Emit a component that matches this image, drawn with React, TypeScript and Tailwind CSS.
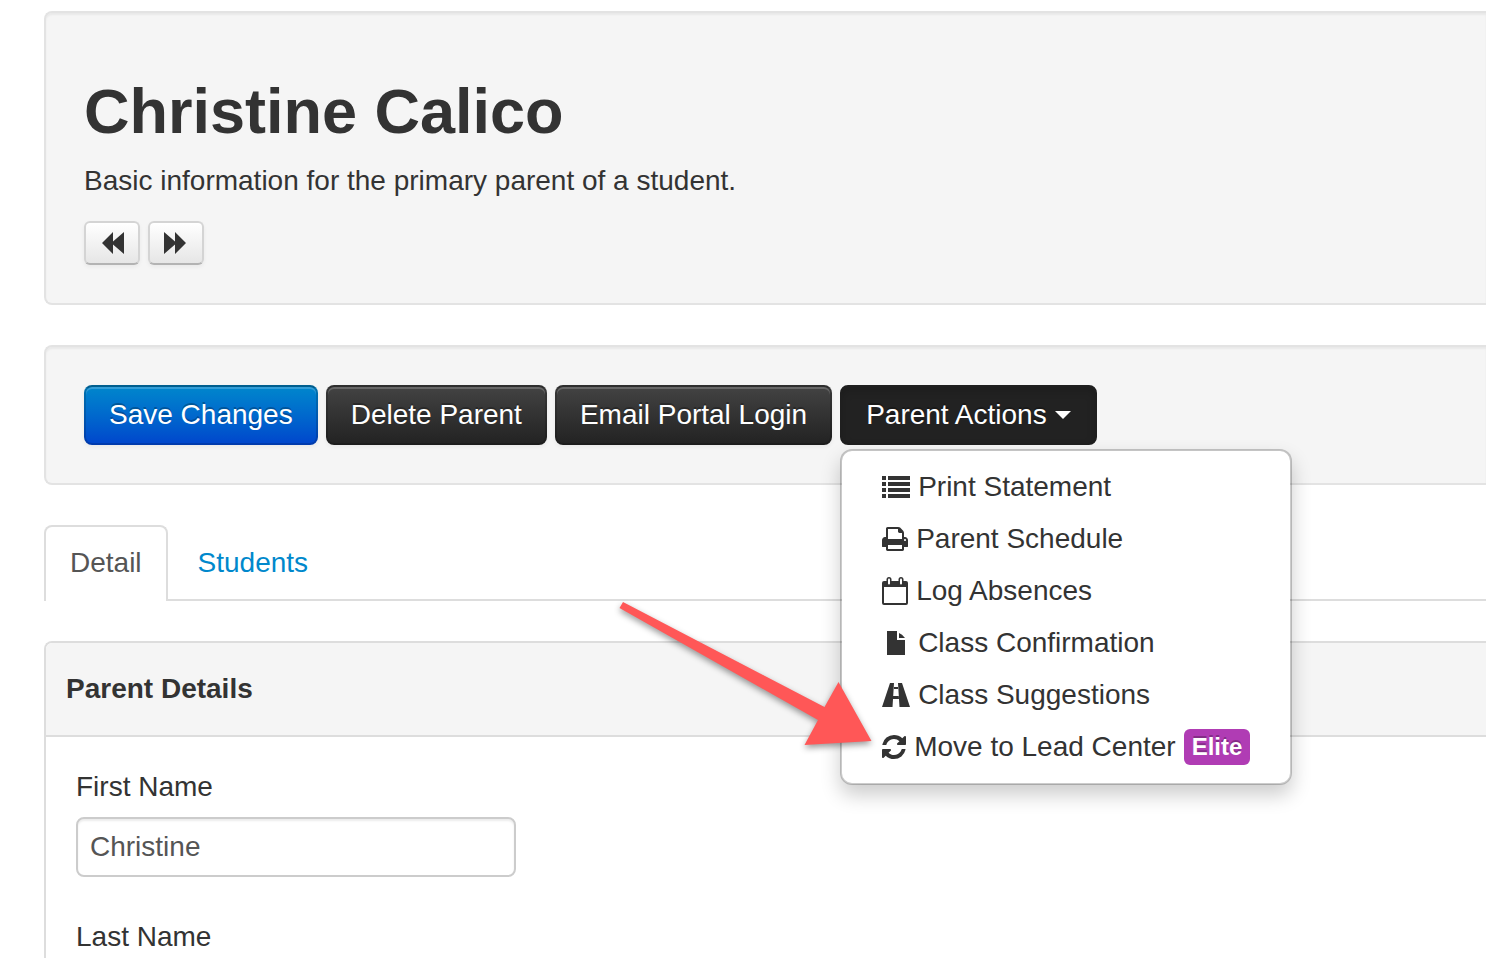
import React, { useState } from 'react';

type IconProps = { className?: string };

const ListIcon = ({ className }: IconProps) => (
    <svg viewBox="0 0 28 22" className={className} fill="currentColor" aria-hidden="true">
        <path d="M0 0h4v4H0zM6 0h22v4H6zM0 6h4v4H0zM6 6h22v4H6zM0 12h4v4H0zM6 12h22v4H6zM0 18h4v4H0zM6 18h22v4H6z" />
    </svg>
);

const PrintIcon = ({ className }: IconProps) => (
    <svg viewBox="0 128 1664 1536" className={className} fill="currentColor" aria-hidden="true">
        <path d="M384 1536h896v-256h-896v256zM384 896h896v-384h-160q-40 0-68-28t-28-68v-160h-640v640zM1536 960q0-26-19-45t-45-19-45 19-19 45 19 45 45 19 45-19 19-45zM1664 960v416q0 13-9.5 22.5t-22.5 9.5h-224v160q0 40-28 68t-68 28h-960q-40 0-68-28t-28-68v-160h-224q-13 0-22.5-9.5t-9.5-22.5v-416q0-79 56.5-135.5t135.5-56.5h64v-544q0-40 28-68t68-28h672q40 0 88 20t76 48l152 152q28 28 48 76t20 88v256h64q79 0 135.5 56.5t56.5 135.5z" />
    </svg>
);

const CalendarIcon = ({ className }: IconProps) => (
    <svg viewBox="0 0 26 28" className={className} fill="currentColor" aria-hidden="true">
        <path fillRule="evenodd" d="M2 4h22a2 2 0 0 1 2 2v20a2 2 0 0 1-2 2H2a2 2 0 0 1-2-2V6a2 2 0 0 1 2-2zM2 10v16h22V10z" />
        <rect x="4.5" y="0" width="5" height="9" rx="2.5" />
        <rect x="16.5" y="0" width="5" height="9" rx="2.5" />
        <rect x="6" y="1.5" width="2" height="6" rx="1" fill="white" />
        <rect x="18" y="1.5" width="2" height="6" rx="1" fill="white" />
    </svg>
);

const FileIcon = ({ className }: IconProps) => (
    <svg viewBox="0 0 18 24" className={className} fill="currentColor" aria-hidden="true">
        <path d="M0 0h10v9h8v15H0zM12 2q3 1 6 5h-6z" />
    </svg>
);

const RoadIcon = ({ className }: IconProps) => (
    <svg viewBox="0 0 28 24" className={className} fill="currentColor" aria-hidden="true">
        <path d="M8 0h4l-1.500 24H0zM20 0h-4l1.500 24H28zM12 4h4v2h-4zM11 13h6v3h-6z" />
    </svg>
);

const RefreshIcon = ({ className }: IconProps) => (
    <svg viewBox="128 128 1536 1536" className={className} fill="currentColor" aria-hidden="true">
        <path d="M1639 1056q0 5-1 7-64 268-268 434.500t-478 166.500q-146 0-282.500-55t-243.500-157l-129 129q-19 19-45 19t-45-19-19-45v-448q0-26 19-45t45-19h448q26 0 45 19t19 45-19 45l-137 137q71 66 161 102t187 36q134 0 250-65t186-179q11-17 53-117 8-23 30-23h192q13 0 22.500 9.500t9.500 22.500zm25-800v448q0 26-19 45t-45 19h-448q-26 0-45-19t-19-45 19-45l138-138q-148-137-349-137-134 0-250 65t-186 179q-11 17-53 117-8 23-30 23h-199q-13 0-22.500-9.500t-9.500-22.500v-7q65-268 270-434.500t480-166.500q146 0 284 55.500t245 156.500l130-129q19-19 45-19t45 19 19 45z" />
    </svg>
);

const BackwardIcon = ({ className }: IconProps) => (
    <svg viewBox="0 0 24 24" className={className} fill="currentColor" aria-hidden="true">
        <path d="M2 12L13 1v9.500L24 1v22l-11-9.500V23z" />
    </svg>
);

const MENU_ITEMS = [
    { label: 'Print Statement', icon: <ListIcon className="w-7 h-[22px]" /> },
    { label: 'Parent Schedule', icon: <PrintIcon className="w-[26px] h-6" /> },
    { label: 'Log Absences', icon: <CalendarIcon className="w-[26px] h-7" /> },
    { label: 'Class Confirmation', icon: <FileIcon className="w-[18px] h-6 mx-[5px]" /> },
    { label: 'Class Suggestions', icon: <RoadIcon className="w-7 h-6" /> },
    { label: 'Move to Lead Center', icon: <RefreshIcon className="size-6" />, badge: 'Elite' },
];

const WELL = 'rounded-l-lg border-2 border-r-0 border-[#e3e3e3] bg-[#f5f5f5] p-[38px] shadow-[inset_0_2px_2px_rgba(0,0,0,0.05)]';
const BTN = 'h-[60px] rounded-lg border-2 text-white whitespace-nowrap [text-shadow:0_-2px_0_rgba(0,0,0,0.25)]';
const BTN_RAISED = 'px-[23px] border-black/15 border-t-black/30 bg-linear-to-b bg-origin-border shadow-[inset_0_2px_0_rgba(255,255,255,0.2),0_2px_4px_rgba(0,0,0,0.05)]';
const BTN_PRIMARY = 'from-[#0088cc] to-[#0044cc]';
const BTN_DARK = 'from-[#444] to-[#222]';
const BTN_MINI = 'flex h-11 w-14 items-center justify-center rounded-md border-2 border-[#d4d4d4] border-b-[#b3b3b3] bg-linear-to-b from-white to-[#e6e6e6] text-[#333] shadow-[0_2px_4px_rgba(0,0,0,0.05)]';
const INPUT = 'h-[60px] w-[440px] rounded-lg border-2 border-[#ccc] bg-white px-3 text-[#555] outline-none shadow-[inset_0_2px_2px_rgba(0,0,0,0.075)]';

const ParentActions = () => {
    const [open, setOpen] = useState(true);

    return (
        <div className="relative">
            <button
                type="button"
                aria-expanded={open}
                onClick={() => setOpen(!open)}
                className={`${BTN} flex items-center gap-2 border-[#1f1f1f] bg-[#222] px-6 shadow-[inset_0_4px_8px_rgba(0,0,0,0.15)]`}
            >
                Parent Actions
                <span className="border-x-8 border-t-8 border-x-transparent border-t-white" />
            </button>
            {open && (
                <ul className="absolute left-0 top-full z-10 mt-1 rounded-xl border-2 border-black/20 bg-white bg-clip-padding py-2.5 shadow-[0_10px_20px_rgba(0,0,0,0.2)]">
                    {MENU_ITEMS.map(item => (
                        <li key={item.label}>
                            <a href="#" className="flex items-center gap-2 whitespace-nowrap px-10 py-1.5">
                                {item.icon}
                                {item.label}
                                {item.badge && (
                                    <span className="rounded-md bg-[#b03cb4] px-2 py-1 text-2xl/7 font-bold text-white [text-shadow:0_-2px_0_rgba(0,0,0,0.25)]">
                                        {item.badge}
                                    </span>
                                )}
                            </a>
                        </li>
                    ))}
                </ul>
            )}
        </div>
    );
};

const Arrow = () => (
    <svg
        viewBox="0 0 260 150"
        className="pointer-events-none absolute left-[615px] top-[598px] z-20 h-[150px] w-[260px] drop-shadow-[0_3px_3px_rgba(0,0,0,0.4)]"
        aria-hidden="true"
    >
        <path fill="#ff5757" d="M8 4L209.500 109L223.500 84L256.500 143L189.500 147L203 122L4.500 10z" />
    </svg>
);

const App: React.FC = () => {
    const [firstName, setFirstName] = useState('Christine');
    const [lastName, setLastName] = useState('');

    return (
        <div className="relative h-screen overflow-hidden bg-white pl-11 pt-[11px] font-['Liberation_Sans',Arial,sans-serif] text-[28px]/10 text-[#333]">
            <main className="flex flex-col gap-10">
                <header className={WELL}>
                    <h1 className="mb-2.5 mt-5 text-[63px]/20 font-bold">Christine Calico</h1>
                    <p className="mb-5">Basic information for the primary parent of a student.</p>
                    <div className="flex gap-2">
                        <button type="button" aria-label="Previous parent" className={BTN_MINI}>
                            <BackwardIcon className="size-6" />
                        </button>
                        <button type="button" aria-label="Next parent" className={BTN_MINI}>
                            <BackwardIcon className="size-6 rotate-180" />
                        </button>
                    </div>
                </header>

                <div className={`${WELL} flex gap-2`}>
                    <button type="button" className={`${BTN} ${BTN_RAISED} ${BTN_PRIMARY}`}>Save Changes</button>
                    <button type="button" className={`${BTN} ${BTN_RAISED} ${BTN_DARK}`}>Delete Parent</button>
                    <button type="button" className={`${BTN} ${BTN_RAISED} ${BTN_DARK}`}>Email Portal Login</button>
                    <ParentActions />
                </div>

                <nav className="flex gap-1 border-b-2 border-[#ddd]">
                    <a href="#detail" className="-mb-0.5 rounded-t-lg border-2 border-b-0 border-[#ddd] bg-white px-6 pb-[18px] pt-4 text-[#555]">Detail</a>
                    <a href="#students" className="border-2 border-b-0 border-transparent px-6 py-4 text-[#0088cc]">Students</a>
                </nav>

                <section className="rounded-tl-lg border-l-2 border-t-2 border-[#ddd]">
                    <h2 className="rounded-tl-md border-b-2 border-[#ddd] bg-[#f5f5f5] px-5 py-[26px] font-bold">Parent Details</h2>
                    <form className="flex flex-col gap-10 p-[30px]">
                        <div className="flex flex-col items-start gap-2.5">
                            <label htmlFor="first-name">First Name</label>
                            <input id="first-name" type="text" value={firstName} onChange={(e) => setFirstName(e.target.value)} className={INPUT} />
                        </div>
                        <div className="flex flex-col items-start gap-2.5">
                            <label htmlFor="last-name">Last Name</label>
                            <input id="last-name" type="text" value={lastName} onChange={(e) => setLastName(e.target.value)} className={INPUT} />
                        </div>
                    </form>
                </section>
            </main>
            <Arrow />
        </div>
    );
};

export default App;
